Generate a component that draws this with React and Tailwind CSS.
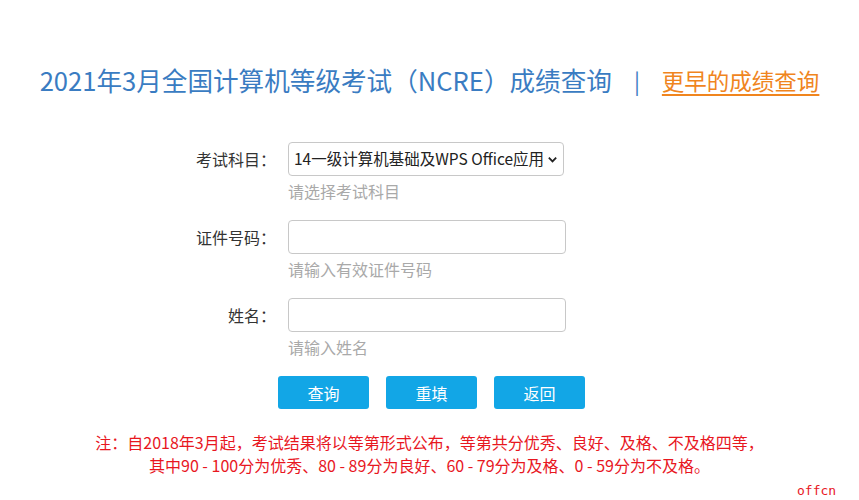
import React from 'react';

const Field = ({ label, hint, children }) => (
  <div className="flex items-start">
    <label className="w-[96px] h-[34px] flex items-center justify-end text-[16px] text-[#333] pr-[12px]">
      {label}
    </label>
    <div className="flex flex-col">
      {children}
      <span className="mt-[4px] h-[22px] leading-[22px] text-[16px] text-[#a9a9a9]">{hint}</span>
    </div>
  </div>
);

const App = () => {
  return (
    <div className="relative w-[859px] h-[500px] bg-white overflow-hidden [font-family:'Noto_Sans_CJK_SC',sans-serif]">
      <div className="pt-[62px] flex items-center justify-center h-[36px] box-content">
        <h1 className="text-[25.6px] leading-[36px] text-[#3a7cc2] font-normal">
          2021年3月全国计算机等级考试（NCRE）成绩查询
        </h1>
        <span className="mx-[22px] text-[22px] text-[#3a7cc2]">|</span>
        <a href="#" className="text-[22.5px] leading-[36px] text-[#f0851e] underline underline-offset-4">
          更早的成绩查询
        </a>
      </div>

      <div className="mt-[44px] pl-[192px] flex flex-col gap-[18px]">
        <Field label="考试科目：" hint="请选择考试科目">
          <div className="w-[276px] h-[34px] border border-[#c8c8c8] rounded-[4px] flex items-center justify-between pl-[5px] pr-[5px] text-[15.5px] text-[#222]">
            <span>14一级计算机基础及WPS Office应用</span>
            <svg width="11" height="11" viewBox="0 0 12 12" fill="none" stroke="#222" strokeWidth="2">
              <path d="M2 4l4 4 4-4" />
            </svg>
          </div>
        </Field>
        <Field label="证件号码：" hint="请输入有效证件号码">
          <input className="w-[278px] h-[34px] border border-[#c8c8c8] rounded-[4px] outline-none px-2" />
        </Field>
        <Field label="姓名：" hint="请输入姓名">
          <input className="w-[278px] h-[34px] border border-[#c8c8c8] rounded-[4px] outline-none px-2" />
        </Field>
      </div>

      <div className="mt-[18px] flex justify-center gap-[17px] pl-[4px]">
        {['查询', '重填', '返回'].map((t) => (
          <button
            key={t}
            className="w-[91px] h-[33px] rounded-[3px] bg-[#12a6e6] text-white text-[16px]"
          >
            {t}
          </button>
        ))}
      </div>

      <div className="mt-[22px] text-center text-[16px] leading-[23px] text-[#e8171f]">
        <p>注：自2018年3月起，考试结果将以等第形式公布，等第共分优秀、良好、及格、不及格四等，</p>
        <p>其中90 - 100分为优秀、80 - 89分为良好、60 - 79分为及格、0 - 59分为不及格。</p>
      </div>

      <span className="absolute left-[797px] top-[481px] text-[13px] text-[#e8171f] [font-family:'DejaVu_Sans_Mono',monospace]">
        offcn
      </span>
    </div>
  );
};

export default App;
